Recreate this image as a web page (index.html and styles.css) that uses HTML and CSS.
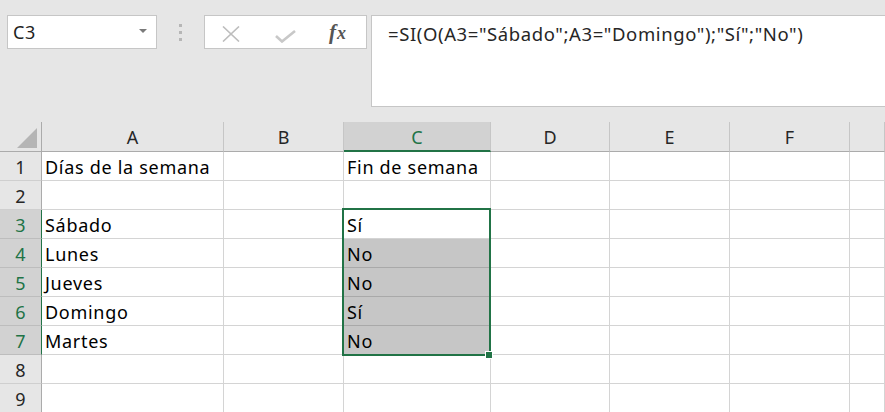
FILE: index.html
```html
<!DOCTYPE html>
<html lang="es">
<head>
<meta charset="utf-8">
<title>Excel</title>
<link rel="stylesheet" href="styles.css">
</head>
<body>
<div class="toolbar">
  <div class="namebox">
    <span class="ref">C3</span>
    <span class="caret"></span>
  </div>
  <div class="grip"><i></i><i></i><i></i></div>
  <div class="fxbox">
    <svg class="ic-x" width="18" height="16" viewBox="0 0 18 16"><path d="M1 0.5 L17 15.5 M17 0.5 L1 15.5" stroke="#bdbdbd" stroke-width="1.6" fill="none"/></svg>
    <svg class="ic-ok" width="21" height="13" viewBox="0 0 21 13"><path d="M1 6 L7 11.5 L20 1" stroke="#c8c8c8" stroke-width="2.6" fill="none"/></svg>
    <span class="fx"><i>f</i><i class="x">x</i></span>
  </div>
  <div class="formula">=SI(O(A3="Sábado";A3="Domingo");"Sí";"No")</div>
</div>
<div class="sheet">
  <div class="corner"><svg width="41" height="29" viewBox="0 0 41 29"><polygon points="37,6 37,26 17,26" fill="#b5b5b5"/></svg></div>
  <div class="ch">A</div>
  <div class="ch">B</div>
  <div class="ch sel">C</div>
  <div class="ch">D</div>
  <div class="ch">E</div>
  <div class="ch">F</div>
  <div class="ch last"></div>

  <div class="rh">1</div>
  <div class="c">Días de la semana</div><div class="c"></div><div class="c">Fin de semana</div><div class="c"></div><div class="c"></div><div class="c"></div><div class="c"></div>

  <div class="rh">2</div>
  <div class="c"></div><div class="c"></div><div class="c"></div><div class="c"></div><div class="c"></div><div class="c"></div><div class="c"></div>

  <div class="rh sel">3</div>
  <div class="c">Sábado</div><div class="c"></div><div class="c">Sí</div><div class="c"></div><div class="c"></div><div class="c"></div><div class="c"></div>

  <div class="rh sel">4</div>
  <div class="c">Lunes</div><div class="c"></div><div class="c hl">No</div><div class="c"></div><div class="c"></div><div class="c"></div><div class="c"></div>

  <div class="rh sel">5</div>
  <div class="c">Jueves</div><div class="c"></div><div class="c hl">No</div><div class="c"></div><div class="c"></div><div class="c"></div><div class="c"></div>

  <div class="rh sel">6</div>
  <div class="c">Domingo</div><div class="c"></div><div class="c hl">Sí</div><div class="c"></div><div class="c"></div><div class="c"></div><div class="c"></div>

  <div class="rh sel">7</div>
  <div class="c">Martes</div><div class="c"></div><div class="c hl">No</div><div class="c"></div><div class="c"></div><div class="c"></div><div class="c"></div>

  <div class="rh">8</div>
  <div class="c"></div><div class="c"></div><div class="c"></div><div class="c"></div><div class="c"></div><div class="c"></div><div class="c"></div>

  <div class="rh">9</div>
  <div class="c"></div><div class="c"></div><div class="c"></div><div class="c"></div><div class="c"></div><div class="c"></div><div class="c"></div>

  <div class="selection"></div>
  <div class="handle"></div>
</div>
</body>
</html>
```

FILE: styles.css
```css
* { box-sizing: border-box; }
html, body {
  margin: 0;
  padding: 0;
  background: #e6e6e6;
  overflow: hidden;
  font-family: "Noto Sans", "Open Sans", sans-serif;
  color: #000;
}
.toolbar {
  height: 122px;
  display: flex;
  align-items: flex-start;
  padding: 15px 0 0 7px;
}
.namebox {
  width: 150px;
  height: 34px;
  background: #fff;
  border: 1px solid #c6c6c6;
  display: flex;
  align-items: center;
  padding-left: 5px;
  padding-right: 9px;
}
.ref {
  flex: 1;
  font-size: 18px;
  letter-spacing: 0.5px;
  color: #222;
  line-height: 22px;
}
.caret {
  width: 0;
  height: 0;
  border-left: 4px solid transparent;
  border-right: 4px solid transparent;
  border-top: 4px solid #7a7a7a;
  margin-top: -2px;
}
.grip {
  width: 47px;
  height: 34px;
  display: flex;
  flex-direction: column;
  align-items: center;
  padding-top: 9px;
  gap: 4px;
}
.grip i {
  display: block;
  width: 3px;
  height: 3px;
  background: #b6b6b6;
}
.fxbox {
  width: 163px;
  height: 34px;
  background: #fff;
  border: 1px solid #c6c6c6;
  display: flex;
  align-items: flex-start;
}
.ic-x { margin: 10px 0 0 17px; }
.ic-ok { margin: 14px 0 0 35px; }
.fx {
  margin: 5px 0 0 33px;
  font-family: "Liberation Serif", serif;
  font-size: 21px;
  line-height: 22px;
  color: #555;
  font-weight: bold;
}
.fx i { font-style: italic; }
.fx .x { font-size: 18px; margin-left: 1px; }
.formula {
  flex: 1;
  height: 92px;
  margin-left: 4px;
  background: #fff;
  border: 1px solid #c6c6c6;
  border-right: none;
  padding: 7px 0 0 16px;
  font-size: 18.5px;
  letter-spacing: 0.6px;
  line-height: 22px;
  color: #262626;
  white-space: nowrap;
}
.sheet {
  position: relative;
  display: grid;
  grid-template-columns: 42px 182px 120px 147px 119px 120px 120px 1fr;
  grid-template-rows: 30px;
  grid-auto-rows: 29px;
  font-size: 18px;
}
.corner {
  border-right: 1px solid #ababab;
  border-bottom: 1px solid #ababab;
}
.corner svg { display: block; }
.ch {
  border-right: 1px solid #c6c6c6;
  border-bottom: 1px solid #ababab;
  display: flex;
  align-items: center;
  justify-content: center;
  color: #262626;
  padding-top: 1px;
}
.ch.sel {
  background: #d2d2d2;
  color: #217346;
  border-bottom: 2px solid #217346;
  border-right-color: #c6c6c6;
}
.rh {
  border-right: 1px solid #ababab;
  border-bottom: 1px solid #cfcfcf;
  display: flex;
  align-items: center;
  justify-content: center;
  color: #262626;
  padding-top: 1px;
}
.rh.sel {
  background: #d2d2d2;
  color: #217346;
  border-right-color: #217346;
  border-bottom-color: #bdbdbd;
}
.c {
  background: #fff;
  border-right: 1px solid #d4d4d4;
  border-bottom: 1px solid #d4d4d4;
  display: flex;
  align-items: center;
  padding: 2px 0 0 3px;
  white-space: nowrap;
  letter-spacing: 0.7px;
  color: #000;
}
.c.hl {
  background: #c6c6c6;
  border-bottom-color: #a9a9a9;
}
.selection {
  position: absolute;
  left: 342px;
  top: 86px;
  width: 149px;
  height: 148px;
  border: 2px solid #217346;
  pointer-events: none;
}
.handle {
  position: absolute;
  left: 485px;
  top: 229px;
  width: 8px;
  height: 8px;
  background: #217346;
  border: 1px solid #fff;
}
```
